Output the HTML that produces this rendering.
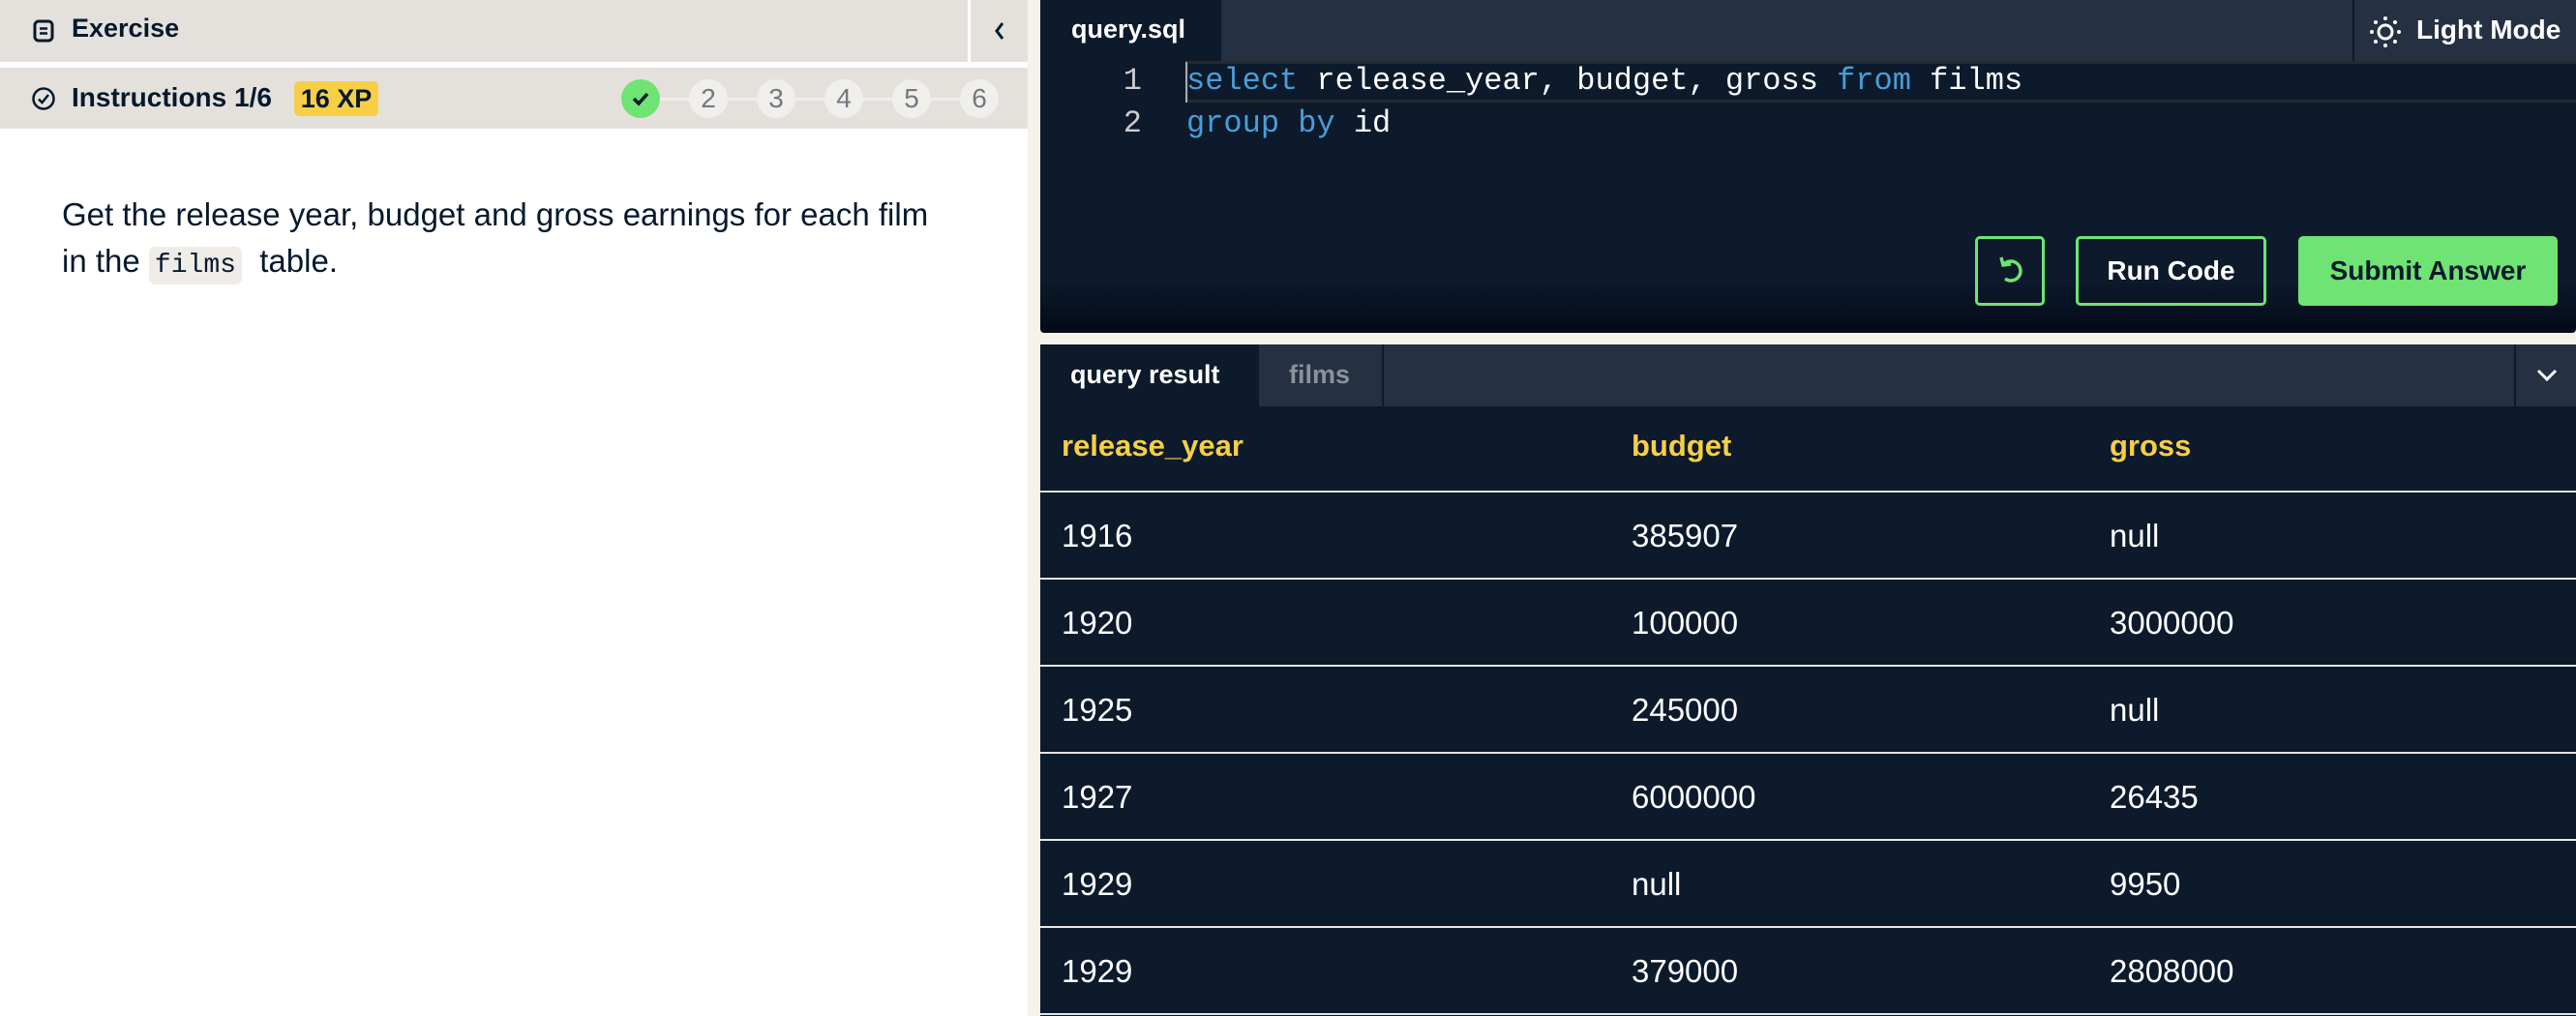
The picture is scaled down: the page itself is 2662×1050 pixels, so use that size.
<!DOCTYPE html>
<html><head><meta charset="utf-8"><style>
*{margin:0;padding:0;box-sizing:border-box}
body{width:2662px;height:1050px;overflow:hidden;background:#f5f2ec;font-family:"Liberation Sans",sans-serif;position:relative}
.a{position:absolute}
.hdr{background:#e4e1dc}
.mono{font-family:"Liberation Mono",monospace}
.circ{position:absolute;top:82px;width:40px;height:40px;border-radius:50%;background:#f0efec;color:#737880;font-size:28px;text-align:center;line-height:40px}
.row{position:absolute;left:1075px;width:1587px;height:90px;border-bottom:2px solid #e6e6e6;color:#fff;font-size:33px}
.row span{position:absolute;top:26px}
</style></head><body>
<!-- left panel -->
<div class="a" style="left:0;top:0;width:1062px;height:1050px;background:#fff"></div>
<div class="a hdr" style="left:0;top:0;width:1062px;height:64px"></div>
<div class="a" style="left:1000px;top:0;width:3px;height:64px;background:#fff"></div>
<svg class="a" style="left:34px;top:20px" width="22" height="24" viewBox="0 0 22 24"><rect x="2" y="2" width="18" height="20" rx="4" fill="none" stroke="#05192d" stroke-width="3"/><line x1="7" y1="9.5" x2="15" y2="9.5" stroke="#05192d" stroke-width="2.5"/><line x1="7" y1="14.5" x2="15" y2="14.5" stroke="#05192d" stroke-width="2.5"/></svg>
<div class="a" style="left:74px;top:14px;font-size:27px;font-weight:bold;color:#05192d">Exercise</div>
<svg class="a" style="left:1025px;top:21px" width="16" height="22" viewBox="0 0 16 22"><path d="M11 3 L5 11 L11 19" fill="none" stroke="#05192d" stroke-width="3"/></svg>
<div class="a hdr" style="left:0;top:70px;width:1062px;height:63px"></div>
<svg class="a" style="left:32px;top:89px" width="26" height="26" viewBox="0 0 26 26"><circle cx="13" cy="13" r="10.5" fill="none" stroke="#05192d" stroke-width="2.5"/><path d="M8 13.5 L11.5 17 L18 9" fill="none" stroke="#05192d" stroke-width="2.5"/></svg>
<div class="a" style="left:74px;top:85px;font-size:28px;font-weight:bold;color:#05192d">Instructions 1/6</div>
<div class="a" style="left:304px;top:84px;width:87px;height:36px;background:#f6cf47;border-radius:5px;font-size:27px;font-weight:bold;color:#05192d;text-align:center;line-height:36px">16 XP</div>
<div class="a" style="left:662px;top:101px;width:350px;height:3px;background:#f0efec"></div>
<div class="circ" style="left:642px;background:#6fe373"><svg width="40" height="40" viewBox="0 0 40 40"><path d="M13 20 L18 25 L27 15" fill="none" stroke="#05192d" stroke-width="3.5"/></svg></div>
<div class="circ" style="left:712px">2</div>
<div class="circ" style="left:782px">3</div>
<div class="circ" style="left:852px">4</div>
<div class="circ" style="left:922px">5</div>
<div class="circ" style="left:992px">6</div>
<div class="a" style="left:64px;top:198px;width:990px;font-size:33px;line-height:48px;color:#05192d">Get the release year, budget and gross earnings for each film<br>in the <span class="mono" style="background:#efece7;border-radius:6px;padding:4px 6px;font-size:28px">films</span> &nbsp;table.</div>

<!-- editor -->
<div class="a" style="left:1075px;top:0;width:1587px;height:344px;background:linear-gradient(#0c1a2c 0,#0c1a2c 290px,#030a18 344px);border-radius:0 0 4px 4px"></div>
<div class="a" style="left:1262px;top:0;width:1400px;height:63px;background:#253043"></div>
<div class="a" style="left:2431px;top:0;width:2px;height:63px;background:#0c1a2c"></div>
<div class="a" style="left:1107px;top:15px;font-size:27px;font-weight:bold;color:#fff">query.sql</div>
<svg class="a" style="left:2448px;top:16px" width="34" height="34" viewBox="0 0 34 34" fill="#fff"><circle cx="17" cy="17" r="7" fill="none" stroke="#fff" stroke-width="3"/><circle cx="17" cy="3" r="2"/><circle cx="17" cy="31" r="2"/><circle cx="3" cy="17" r="2"/><circle cx="31" cy="17" r="2"/><circle cx="7" cy="7" r="2"/><circle cx="27" cy="7" r="2"/><circle cx="7" cy="27" r="2"/><circle cx="27" cy="27" r="2"/></svg>
<div class="a" style="left:2497px;top:15px;font-size:28px;font-weight:bold;color:#fff">Light Mode</div>
<div class="a" style="left:1225px;top:63px;width:1437px;height:43px;border:3px solid #262a30;border-right:none"></div>
<div class="a" style="left:1225px;top:64px;width:2px;height:42px;background:#aaa"></div>
<div class="a mono" style="left:1140px;top:62px;width:40px;text-align:right;font-size:32px;line-height:44px;color:#ccc">1<br>2</div>
<div class="a mono" style="left:1226px;top:62px;font-size:32px;line-height:44px;color:#fff;white-space:pre"><span style="color:#4a9ed8">select</span> release_year, budget, gross <span style="color:#4a9ed8">from</span> films
<span style="color:#4a9ed8">group by</span> id</div>
<div class="a" style="left:2041px;top:244px;width:72px;height:72px;border:3px solid #6fe373;border-radius:5px"><svg width="66" height="66" viewBox="0 0 66 66"><path d="M26 27 A10 10 0 1 1 28 41" fill="none" stroke="#6fe373" stroke-width="3.5"/><path d="M24 19 L26 27 L34 26" fill="none" stroke="#6fe373" stroke-width="3.5"/></svg></div>
<div class="a" style="left:2145px;top:244px;width:197px;height:72px;border:3px solid #6fe373;border-radius:5px;color:#fff;font-size:28px;font-weight:bold;text-align:center;line-height:66px">Run Code</div>
<div class="a" style="left:2375px;top:244px;width:268px;height:72px;background:#6fe373;border-radius:5px;color:#05192d;font-size:28px;font-weight:bold;text-align:center;line-height:72px">Submit Answer</div>

<!-- results -->
<div class="a" style="left:1075px;top:356px;width:1587px;height:694px;background:#0c1a2c"></div>
<div class="a" style="left:1301px;top:356px;width:1361px;height:64px;background:#253043"></div>
<div class="a" style="left:1428px;top:356px;width:2px;height:64px;background:#0c1a2c"></div>
<div class="a" style="left:2598px;top:356px;width:2px;height:64px;background:#0c1a2c"></div>
<div class="a" style="left:1106px;top:372px;font-size:27px;font-weight:bold;color:#fff">query result</div>
<div class="a" style="left:1332px;top:372px;font-size:27px;font-weight:bold;color:#8a929c">films</div>
<svg class="a" style="left:2618px;top:378px" width="28" height="20" viewBox="0 0 28 20"><path d="M5 5 L14 14 L23 5" fill="none" stroke="#fff" stroke-width="3"/></svg>
<div class="row" style="top:420px;height:89px"><span style="left:22px;top:23px;color:#f6cf47;font-weight:bold;font-size:31px">release_year</span><span style="left:611px;top:23px;color:#f6cf47;font-weight:bold;font-size:31px">budget</span><span style="left:1105px;top:23px;color:#f6cf47;font-weight:bold;font-size:31px">gross</span></div>
<div class="row" style="top:509px"><span style="left:22px">1916</span><span style="left:611px">385907</span><span style="left:1105px">null</span></div>
<div class="row" style="top:599px"><span style="left:22px">1920</span><span style="left:611px">100000</span><span style="left:1105px">3000000</span></div>
<div class="row" style="top:689px"><span style="left:22px">1925</span><span style="left:611px">245000</span><span style="left:1105px">null</span></div>
<div class="row" style="top:779px"><span style="left:22px">1927</span><span style="left:611px">6000000</span><span style="left:1105px">26435</span></div>
<div class="row" style="top:869px"><span style="left:22px">1929</span><span style="left:611px">null</span><span style="left:1105px">9950</span></div>
<div class="row" style="top:959px"><span style="left:22px">1929</span><span style="left:611px">379000</span><span style="left:1105px">2808000</span></div>
</body></html>
